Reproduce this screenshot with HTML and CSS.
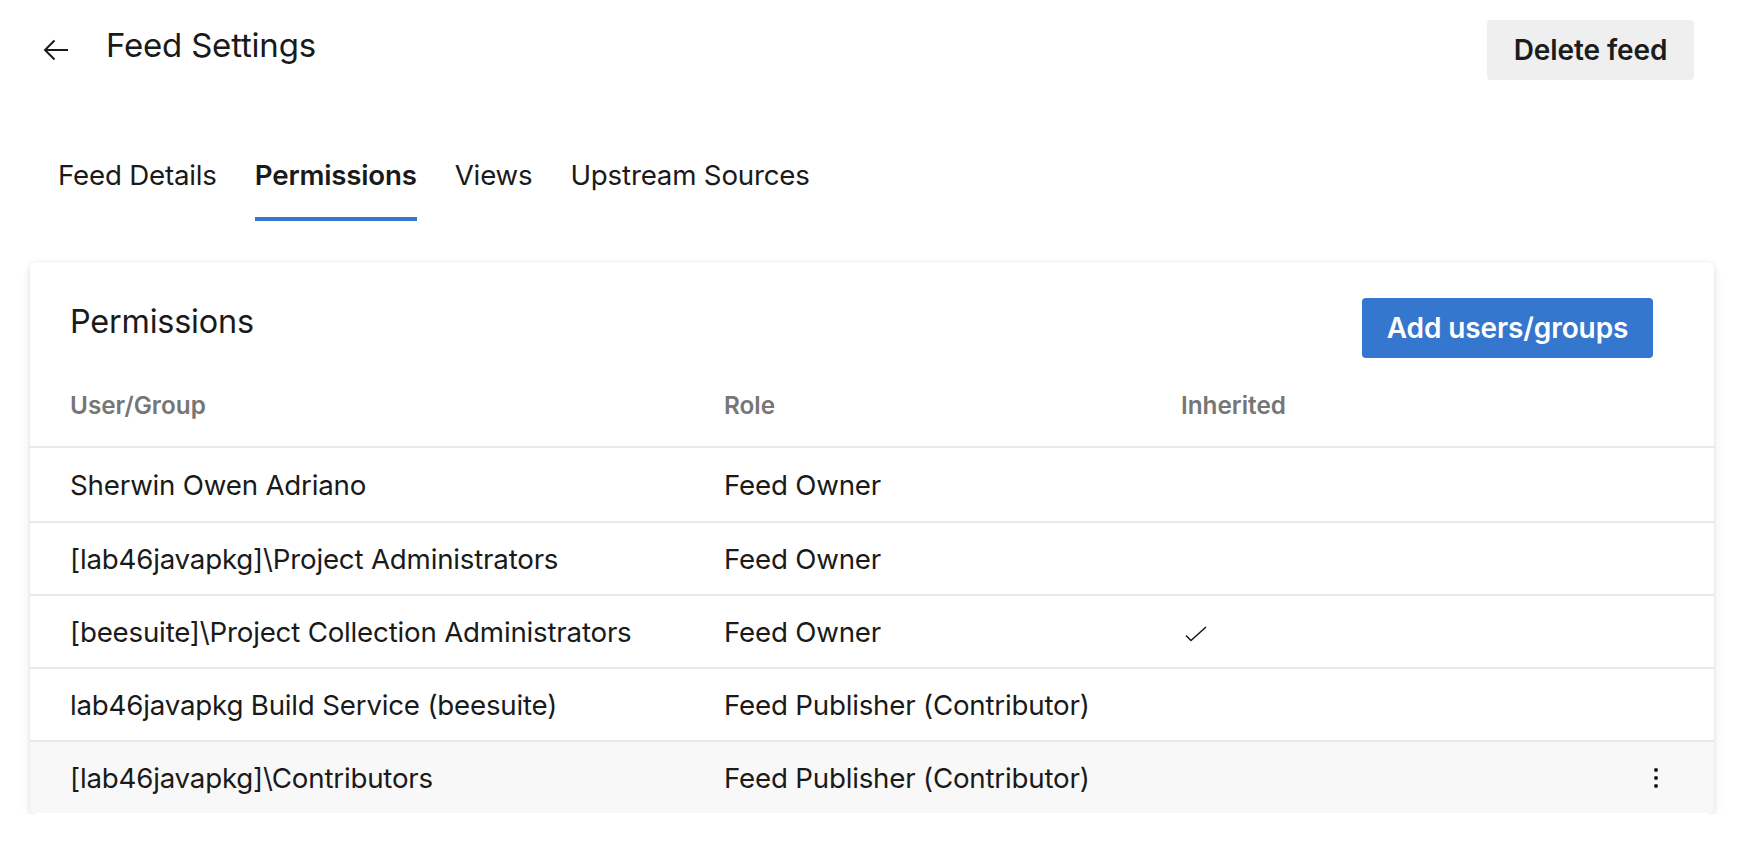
FILE: index.html
```html
<!DOCTYPE html>
<html lang="en">
<head>
<meta charset="utf-8">
<title>Feed Settings</title>
<link rel="stylesheet" href="styles.css">
</head>
<body>
<div class="page">
  <header class="topbar">
    <div class="title-group">
      <button class="back" aria-label="Back">
        <svg width="26" height="22" viewBox="0 0 26 22"><path d="M25 11H2M11.5 1.5L2 11l9.5 9.5" fill="none" stroke="#1a1a1a" stroke-width="2"/></svg>
      </button>
      <h1 class="title">Feed Settings</h1>
    </div>
    <button class="btn btn-default">Delete feed</button>
  </header>

  <nav class="tabs">
    <a class="tab">Feed Details</a>
    <a class="tab active">Permissions</a>
    <a class="tab">Views</a>
    <a class="tab">Upstream Sources</a>
  </nav>

  <section class="card">
    <div class="card-header">
      <h2 class="card-title">Permissions</h2>
      <button class="btn btn-primary">Add users/groups</button>
    </div>
    <div class="grid head">
      <div>User/Group</div>
      <div>Role</div>
      <div>Inherited</div>
      <div></div>
    </div>
    <div class="grid row">
      <div>Sherwin Owen Adriano</div>
      <div>Feed Owner</div>
      <div></div>
      <div></div>
    </div>
    <div class="grid row">
      <div>[lab46javapkg]\Project Administrators</div>
      <div>Feed Owner</div>
      <div></div>
      <div></div>
    </div>
    <div class="grid row">
      <div>[beesuite]\Project Collection Administrators</div>
      <div>Feed Owner</div>
      <div class="check"><svg width="22" height="16" viewBox="0 0 22 16"><path d="M1 9.5l5 5L21 1" fill="none" stroke="#1a1a1a" stroke-width="1.6"/></svg></div>
      <div></div>
    </div>
    <div class="grid row">
      <div>lab46javapkg Build Service (beesuite)</div>
      <div>Feed Publisher (Contributor)</div>
      <div></div>
      <div></div>
    </div>
    <div class="grid row hover">
      <div>[lab46javapkg]\Contributors</div>
      <div>Feed Publisher (Contributor)</div>
      <div></div>
      <div class="more"><span class="dots"><i></i><i></i><i></i></span></div>
    </div>
  </section>
</div>
</body>
</html>
```

FILE: styles.css
```css
* { box-sizing: border-box; }
html, body { margin: 0; padding: 0; background: #ffffff; }
body {
  font-family: Inter, "Noto Sans", "Liberation Sans", sans-serif;
  color: #1a1a1a;
  font-size: 28px;
}
.page { width: 1754px; }

.topbar {
  display: flex;
  justify-content: space-between;
  align-items: flex-start;
  padding: 20px 60px 0 43px;
  height: 80px;
}
.title-group {
  display: flex;
  align-items: center;
  height: 60px;
}
.back {
  background: none;
  border: 0;
  padding: 0;
  margin: 0;
  width: 26px;
  height: 22px;
  display: flex;
}
.title {
  margin: 0 0 10px 37px;
  font-size: 33px;
  font-weight: 400;
  line-height: 40px;
  letter-spacing: -0.2px;
}
.btn {
  font-family: inherit;
  font-size: 28px;
  font-weight: 600;
  border: 0;
  border-radius: 4px;
  height: 60px;
  padding: 0;
  letter-spacing: -0.1px;
}
.btn-default {
  background: #efefef;
  color: #1c1c1c;
  width: 207px;
}
.btn-primary {
  background: #3577ce;
  color: #ffffff;
  width: 291px;
}

.tabs {
  display: flex;
  gap: 38px;
  padding-left: 58px;
  margin-top: 75px;
}
.tab {
  display: block;
  font-size: 27.7px;
  line-height: 40px;
  padding-bottom: 22px;
  border-bottom: 4px solid transparent;
  color: #1a1a1a;
  letter-spacing: -0.2px;
}
.tab.active {
  font-weight: 600;
  border-bottom-color: #3478cf;
}

.card {
  margin: 41px 40px 0 30px;
  padding-bottom: 1px;
  background: #ffffff;
  border-radius: 6px;
  box-shadow: 0 3px 10px rgba(0,0,0,0.11), 0 0 3px rgba(0,0,0,0.08);
  overflow: hidden;
}
.card-header {
  display: flex;
  justify-content: space-between;
  align-items: flex-start;
  padding: 36px 61px 0 40px;
}
.card-title {
  margin: 0;
  font-size: 32.4px;
  font-weight: 400;
  line-height: 48px;
  letter-spacing: -0.2px;
}

.grid {
  display: grid;
  grid-template-columns: 654px 457px 1fr 36px;
  padding: 0 40px;
  align-items: center;
}
.head {
  height: 90px;
  padding-top: 6px;
  font-size: 24.3px;
  font-weight: 600;
  color: #767676;
  border-bottom: 2px solid #e9e9e9;
}
.row {
  height: 73px;
  font-size: 27.7px;
  letter-spacing: -0.2px;
}
.row + .row { border-top: 2px solid #e9e9e9; }
.row.hover { background: #f8f8f8; }
.check { display: flex; padding-left: 4px; padding-top: 4px; }
.more { display: flex; justify-content: center; }
.dots { display: flex; flex-direction: column; gap: 4px; }
.dots i { display: block; width: 4px; height: 4px; border-radius: 50%; background: #1a1a1a; }
```
